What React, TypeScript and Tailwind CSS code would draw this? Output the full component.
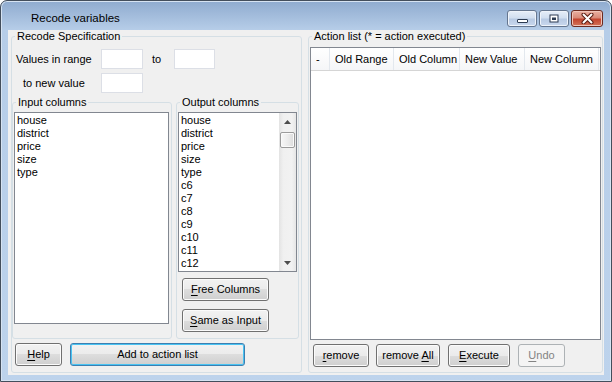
import type { ReactNode } from 'react'

const inputCols = ['house', 'district', 'price', 'size', 'type']
const outputCols = ['house', 'district', 'price', 'size', 'type', 'c6', 'c7', 'c8', 'c9', 'c10', 'c11', 'c12']

const headers = [
  { label: '-', w: 'w-[19px]' },
  { label: 'Old Range', w: 'w-[64px]' },
  { label: 'Old Column', w: 'w-[66px]' },
  { label: 'New Value', w: 'w-[65px]' },
  { label: 'New Column', w: 'w-[74px]' },
]

function Key({ children }: { children: ReactNode }) {
  return <span className="underline decoration-1 underline-offset-[2px]">{children}</span>
}

function Btn({
  children,
  className = '',
  disabled,
  focused,
}: {
  children: ReactNode
  className?: string
  disabled?: boolean
  focused?: boolean
}) {
  const look = disabled
    ? 'border-[#adb2b5] bg-[#f4f4f4] text-[#838383]'
    : focused
      ? 'border-[#3c7fb1] bg-[linear-gradient(to_bottom,#f2f2f2_0%,#ebebeb_50%,#dddddd_50%,#cfcfcf_100%)] shadow-[inset_0_0_0_1px_#48c3f2] text-black'
      : 'border-[#707070] bg-[linear-gradient(to_bottom,#f2f2f2_0%,#ebebeb_50%,#dddddd_50%,#cfcfcf_100%)] shadow-[inset_0_0_0_1px_#fbfbfb] text-black'
  return (
    <button
      disabled={disabled}
      className={`h-[23px] shrink-0 rounded-[3px] border text-[11px] leading-none ${look} ${className}`}
    >
      {children}
    </button>
  )
}

function TextBox({ className = '' }: { className?: string }) {
  return <div className={`h-[20px] shrink-0 border border-[#dcdfe6] bg-white ${className}`} />
}

function Group({ title, className = '', children }: { title: string; className?: string; children: ReactNode }) {
  return (
    <fieldset className={`min-w-0 shrink-0 rounded-[3px] border border-[#d5dfe5] ${className}`}>
      <legend className="ml-[3px] px-[2px] leading-[13px]">{title}</legend>
      {children}
    </fieldset>
  )
}

function Scrollbar() {
  return (
    <div className="flex w-[17px] shrink-0 flex-col bg-[linear-gradient(to_right,#e3e3e3,#f0f0f0_25%,#f2f2f2_75%,#e6e6e6)]">
      <div className="flex h-[17px] items-center justify-center">
        <svg width="7" height="4" viewBox="0 0 7 4">
          <path d="M0 4 L3.5 0 L7 4 Z" fill="#4d4d4d" />
        </svg>
      </div>
      <div className="mx-[1px] mt-[2px] h-[16px] rounded-[2px] border border-[#9b9b9b] bg-[linear-gradient(to_right,#f7f7f7,#ececec_50%,#dcdcdc)] shadow-[inset_0_0_0_1px_#fafafa]" />
      <div className="flex-1" />
      <div className="flex h-[17px] items-center justify-center">
        <svg width="7" height="4" viewBox="0 0 7 4">
          <path d="M0 0 L3.5 4 L7 0 Z" fill="#4d4d4d" />
        </svg>
      </div>
    </div>
  )
}

function Items({ items }: { items: string[] }) {
  return (
    <div className="flex-1 overflow-hidden pl-[2px] pt-[1px]">
      {items.map(it => (
        <div key={it} className="h-[13px] leading-[13px]">
          {it}
        </div>
      ))}
    </div>
  )
}

function CaptionButton({ children, close }: { children: ReactNode; close?: boolean }) {
  return (
    <div
      className={`flex h-[17px] items-center justify-center rounded-[3px] border ${
        close
          ? 'w-[32px] border-[#6b2a20] bg-[linear-gradient(to_bottom,#eab0a2_0%,#d98a78_45%,#c4452f_55%,#d3745a_100%)] shadow-[inset_0_0_0_1px_#f0c4b8]'
          : 'w-[30px] border-[#65768f] bg-[linear-gradient(to_bottom,#e6eef8_0%,#d2dff0_45%,#b8cae3_55%,#c9d8ee_100%)] shadow-[inset_0_0_0_1px_#eef3fa]'
      }`}
    >
      {children}
    </div>
  )
}

export default function App() {
  return (
    <div className="flex h-[382px] w-[612px] flex-col overflow-hidden rounded-t-[7px] border border-[#434e5c] bg-[linear-gradient(to_bottom,#8fabcf_0px,#b6cde8_29px,#bdd3ec_100%)] font-['Liberation_Sans',Arial,sans-serif] text-[11px] text-black shadow-[inset_0_0_0_1px_#d6e3f2]">
      {/* Title bar */}
      <div className="flex h-[29px] shrink-0 items-start">
        <div className="ml-[30px] mt-[10px] flex-1 text-[11.5px] leading-[15px]">Recode variables</div>
        <div className="mr-[8px] mt-[9px] flex gap-[2px]">
          <CaptionButton>
            <div className="mt-[5px] h-[4px] w-[11px] rounded-[1px] border border-[#2c3b52] bg-white" />
          </CaptionButton>
          <CaptionButton>
            <svg width="10" height="9" viewBox="0 0 10 9">
              <rect x="0.5" y="0.5" width="9" height="8" fill="#2c3b52" />
              <rect x="1.5" y="1.5" width="7" height="6" fill="#fff" />
              <rect x="3" y="3.5" width="4" height="2.5" fill="#2c3b52" />
            </svg>
          </CaptionButton>
          <CaptionButton close>
            <svg width="13" height="11" viewBox="0 0 13 11">
              <path d="M2.5 1.5 L10.5 9.5 M10.5 1.5 L2.5 9.5" stroke="#5a1c12" strokeWidth="4" strokeLinecap="round" />
              <path d="M2.5 1.5 L10.5 9.5 M10.5 1.5 L2.5 9.5" stroke="#fff" strokeWidth="2" strokeLinecap="round" />
            </svg>
          </CaptionButton>
        </div>
      </div>

      {/* Client area */}
      <div className="mx-[7px] flex flex-1 bg-[#f0f0f0] pb-[2px] pl-[3px] pr-[1px]">
        {/* Left: recode specification */}
        <Group title="Recode Specification" className="flex w-[291px] flex-col">
          <div className="mt-[6px] flex h-[20px] items-center">
            <span className="w-[89px] shrink-0 pl-[4px]">Values in range</span>
            <TextBox className="w-[42px]" />
            <span className="w-[31px] shrink-0 pl-[9px]">to</span>
            <TextBox className="w-[41px]" />
          </div>
          <div className="mt-[4px] flex h-[20px] items-center">
            <span className="w-[89px] shrink-0 pl-[11px]">to new value</span>
            <TextBox className="w-[42px]" />
          </div>

          <div className="mt-[3px] flex">
            <Group title="Input columns" className="w-[160px]">
              <div className="mb-[14px] ml-[1px] mt-[3px] flex h-[212px] w-[155px] border border-[#828790] bg-white">
                <Items items={inputCols} />
              </div>
            </Group>
            <Group title="Output columns" className="ml-[4px] flex w-[123px] flex-col">
              <div className="ml-[1px] mt-[3px] flex h-[160px] w-[119px] border border-[#828790] bg-white">
                <Items items={outputCols} />
                <Scrollbar />
              </div>
              <Btn className="ml-[5px] mt-[6px] w-[87px]">
                <Key>F</Key>ree Columns
              </Btn>
              <Btn className="mb-[6px] ml-[5px] mt-[8px] w-[87px]">
                <Key>S</Key>ame as Input
              </Btn>
            </Group>
          </div>

          <div className="mt-[4px] flex pb-[6px]">
            <Btn className="ml-[3px] w-[47px]">
              <Key>H</Key>elp
            </Btn>
            <Btn focused className="ml-[8px] w-[175px]">
              Add to action list
            </Btn>
          </div>
        </Group>

        {/* Right: action list */}
        <Group title="Action list (* = action executed)" className="ml-[6px] flex w-[295px] flex-col">
          <div className="ml-[1px] mt-[4px] flex h-[293px] w-[291px] flex-col border border-[#828790] bg-white">
            <div className="flex h-[23px] border-b border-[#d5d5d5] bg-[linear-gradient(to_bottom,#ffffff,#f5f6f8)]">
              {headers.map(h => (
                <div key={h.label} className={`${h.w} flex items-center border-r border-[#e3e8ee] pl-[5px]`}>
                  {h.label}
                </div>
              ))}
            </div>
          </div>
          <div className="mt-[4px] flex pb-[5px]">
            <Btn className="ml-[4px] w-[56px]">
              <Key>r</Key>emove
            </Btn>
            <Btn className="ml-[7px] w-[64px]">
              remove <Key>A</Key>ll
            </Btn>
            <Btn className="ml-[8px] w-[62px]">
              <Key>E</Key>xecute
            </Btn>
            <Btn disabled className="ml-[8px] w-[47px]">
              <Key>U</Key>ndo
            </Btn>
          </div>
        </Group>
      </div>
      <div className="h-[6px] shrink-0" />
    </div>
  )
}
